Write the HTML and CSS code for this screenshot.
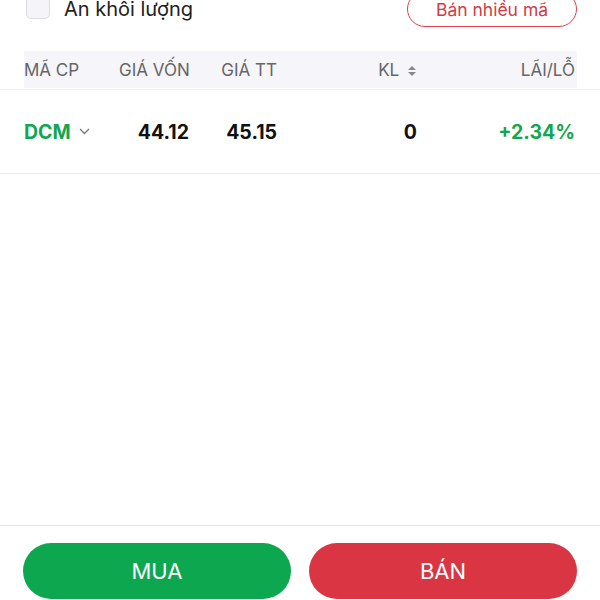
FILE: index.html
```html
<!DOCTYPE html>
<html lang="vi">
<head>
    <meta charset="UTF-8">
    <meta name="viewport" content="width=device-width, initial-scale=1.0">
    <title>Bán cổ phiếu</title>
    <link rel="stylesheet" href="styles.css">
</head>
<body>
    <div class="page">
        <div class="toolbar">
            <label class="hide-volume">
                <span class="checkbox"></span>
                <span>Ẩn khối lượng</span>
            </label>
            <button class="btn-outline" type="button">Bán nhiều mã</button>
        </div>

        <div class="table-head">
            <div class="row head">
                <div class="col-code">MÃ CP</div>
                <div class="col-num">GIÁ VỐN</div>
                <div class="col-num">GIÁ TT</div>
                <div class="col-num">KL
                    <svg class="sort" width="10" height="12" viewBox="0 0 10 12">
                        <path d="M5 1 L9 5 H1 Z M5 11 L1 7 H9 Z" fill="#888"/>
                    </svg>
                </div>
                <div class="col-num">LÃI/LỖ</div>
            </div>
        </div>

        <div class="list">
            <div class="row item">
                <div class="col-code code">DCM
                    <svg class="chevron" width="11" height="7" viewBox="0 0 11 7">
                        <path d="M1 1 L5.5 5.5 L10 1" fill="none" stroke="#777" stroke-width="1.3"/>
                    </svg>
                </div>
                <div class="col-num">44.12</div>
                <div class="col-num">45.15</div>
                <div class="col-num">0</div>
                <div class="col-num up">+2.34%</div>
            </div>
        </div>

        <div class="footer">
            <button class="btn btn-buy" type="button">MUA</button>
            <button class="btn btn-sell" type="button">BÁN</button>
        </div>
    </div>
</body>
</html>
```

FILE: styles.css
```css
* {
    box-sizing: border-box;
}
body {
    margin: 0;
    font-family: Inter, "Noto Sans", sans-serif;
    color: #111;
    background: #fff;
    overflow: hidden;
}
.page {
    display: flex;
    flex-direction: column;
    height: 100vh;
}
.toolbar {
    display: flex;
    align-items: center;
    justify-content: space-between;
    height: 36px;
    margin-top: -9px;
    padding: 0 23px 0 26px;
}
.hide-volume {
    display: flex;
    align-items: center;
    gap: 14px;
    font-size: 20px;
    color: #222;
}
.checkbox {
    width: 24px;
    height: 24px;
    margin-top: -4px;
    border: 1px solid #dcdce2;
    border-radius: 5px;
    background: #f4f4f9;
}
.btn-outline {
    width: 170px;
    height: 36px;
    border: 1.5px solid #d9434f;
    border-radius: 18px;
    background: #fff;
    color: #d23a47;
    font-family: inherit;
    font-size: 17.5px;
}
.table-head {
    margin-top: 24px;
    padding: 0 23px 1px 24px;
    border-bottom: 1px solid #ececef;
}
.row {
    display: grid;
    grid-template-columns: 95px 70px 88px 140px 1fr;
    align-items: center;
}
.head {
    height: 37px;
    padding-right: 2px;
    background: #f5f5fa;
    font-size: 17px;
    color: #666;
}
.col-num {
    white-space: nowrap;
    text-align: right;
}
.sort {
    margin-left: 3px;
    vertical-align: -1px;
}
.list {
    flex: 1;
}
.item {
    height: 84px;
    padding: 0 25px 0 24px;
    border-bottom: 1px solid #ececef;
    font-size: 19.5px;
    font-weight: 700;
}
.code {
    display: flex;
    align-items: center;
    gap: 8px;
    color: #12a651;
}
.up {
    color: #12a651;
}
.footer {
    display: flex;
    gap: 18px;
    padding: 17px 23px 1px;
    border-top: 1px solid #e6e6ea;
}
.btn {
    flex: 1;
    height: 56px;
    border: none;
    border-radius: 28px;
    color: #fff;
    font-family: inherit;
    font-size: 22px;
}
.btn-buy {
    background: #0ca74f;
}
.btn-sell {
    background: #da3542;
}
```
